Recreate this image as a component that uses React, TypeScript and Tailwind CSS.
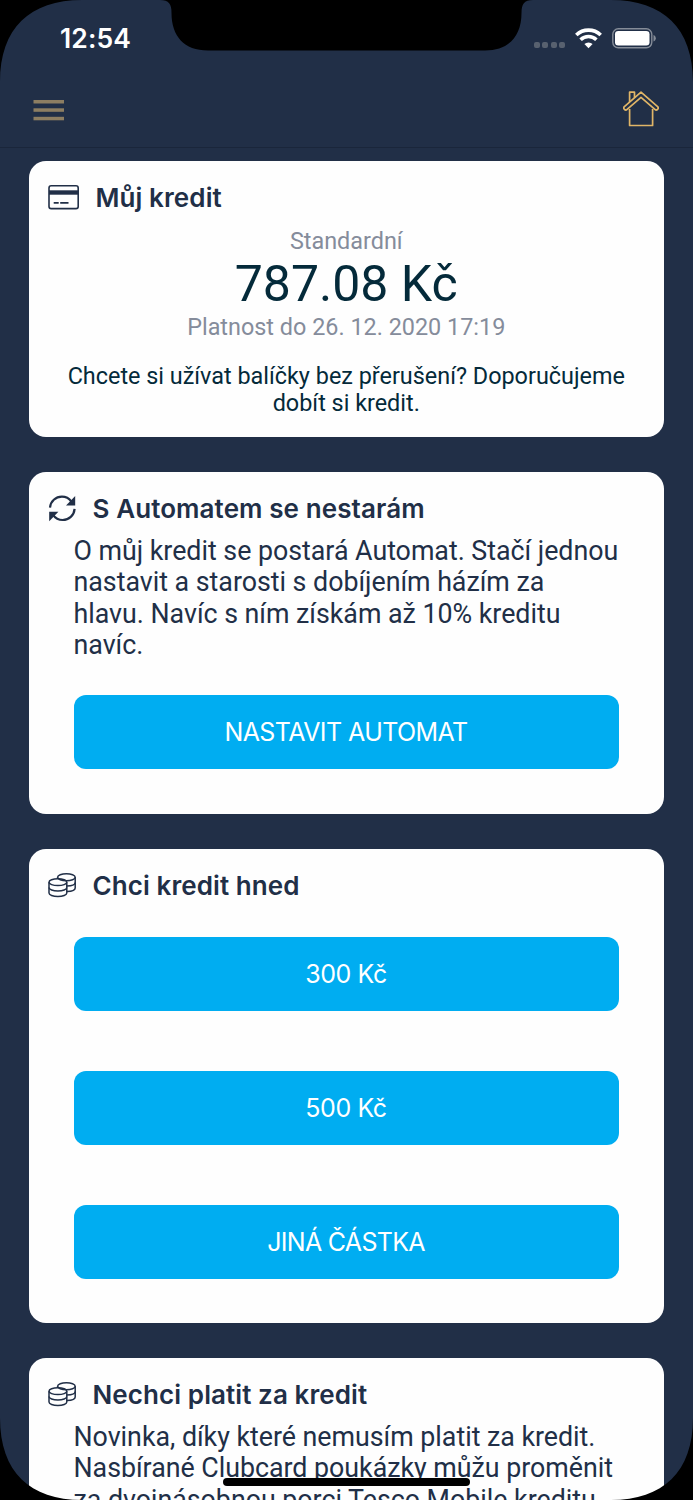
import { ReactNode } from "react";

// ----------------------
// ICONS
// ----------------------
function MenuIcon() {
  return (
    <svg width="31" height="21" viewBox="0 0 31 21" fill="#8d7e62">
      <rect x="0.5" y="0" width="30.5" height="3.5" />
      <rect x="0.5" y="8.3" width="30.5" height="3.5" />
      <rect x="0.5" y="16.8" width="30.5" height="3.5" />
    </svg>
  );
}

function HomeIcon() {
  return (
    <svg width="36" height="36" viewBox="0 0 36 36" fill="none" stroke="#e0b567" strokeWidth="1.7" strokeLinejoin="round">
      <path d="M6.6 18v16.5h23V18" />
      <path d="M18 1.2 1.4 15.6a1.7 1.7 0 0 0 2.7 2.7L18 6.4l13.9 11.9a1.7 1.7 0 0 0 2.7-2.7L18 1.2Z" />
      <path d="M6.6 11V1.2h4.9v5.6" />
    </svg>
  );
}

function CardIcon() {
  return (
    <svg width="31" height="25" viewBox="0 0 31 25" fill="none" stroke="#212f47">
      <rect x="1" y="0.8" width="29.2" height="22.8" rx="2.2" strokeWidth="1.6" />
      <path d="M1 7.5h29" strokeWidth="4.4" />
      <path d="M5.7 17.9h5M12.2 17.9h8.3" strokeWidth="1.7" />
    </svg>
  );
}

function RefreshIcon() {
  return (
    <svg width="28" height="27" viewBox="0 0 28 27" fill="none" stroke="#212f47" strokeWidth="2.2">
      <path d="M2 12.7C2.5 6.2 7.7 1.7 13.9 1.7c4 0 7.3 1.9 9.5 4.9" />
      <path d="M26.6 13.9c-.5 6.6-5.7 11.1-11.9 11.1-4.2 0-7.5-2-9.7-5.2" />
      <path d="M27.2 1v9.5H18Z" fill="#212f47" stroke="none" />
      <path d="M1.2 26.2v-9.5h9.2Z" fill="#212f47" stroke="none" />
    </svg>
  );
}

function CoinsIcon() {
  return (
    <svg width="28" height="25" viewBox="0 0 28 25" fill="none" stroke="#212f47" strokeWidth="1.5">
      <ellipse cx="9.9" cy="9.2" rx="8.9" ry="3.4" />
      <path d="M1 9.2v10.7c0 2 4 3.6 8.9 3.6s8.9-1.6 8.9-3.6V9.2" />
      <path d="M1 14.5c0 2 4 3.6 8.9 3.6s8.9-1.6 8.9-3.6" />
      <path d="M9.6 5.8V4.3c0-2 4-3.5 8.8-3.5s8.8 1.500 8.800 3.500v10.600c0 1.800-3.300 3.300-8.300 3.700" />
      <path d="M9.600 4.300c0 2 4 3.500 8.800 3.500s8.800-1.500 8.800-3.500" />
      <path d="M18.800 13.100c5-.2 8.400-1.700 8.400-3.600" />
    </svg>
  );
}

function WifiIcon() {
  return (
    <svg width="27" height="21" viewBox="0 0 27 21" fill="none" stroke="#fff" strokeWidth="3.6">
      <path d="M1.3 7a17.6 17.6 0 0 1 24.4 0" />
      <path d="M5.6 11.7a11.4 11.4 0 0 1 15.8 0" />
      <path d="M13.5 20.3 9.4 16.1a5.8 5.8 0 0 1 8.2 0Z" fill="#fff" stroke="none" />
    </svg>
  );
}

function BatteryIcon() {
  return (
    <svg width="45" height="21" viewBox="0 0 45 21">
      <rect x="0.8" y="0.8" width="39" height="19" rx="5.5" fill="none" stroke="#858c98" strokeWidth="1.4" />
      <rect x="3" y="3" width="34.5" height="14.6" rx="3.3" fill="#fff" />
      <path d="M41.5 7v6.6c1.4-.5 2.3-1.8 2.3-3.3s-.9-2.8-2.3-3.3Z" fill="#858c98" />
    </svg>
  );
}

// ----------------------
// BUILDING BLOCKS
// ----------------------
function Card({ className, children }: { className: string; children: ReactNode }) {
  return (
    <section className={`w-[635.5px] shrink-0 rounded-[17px] bg-[#fefefe] text-[#212f47] ${className}`}>
      {children}
    </section>
  );
}

function CardTitle({ icon, children }: { icon: ReactNode; children: ReactNode }) {
  return (
    <h2 className="flex h-[73px] items-center pl-[19.5px] text-[26px] font-semibold tracking-[0.09px] whitespace-nowrap">
      {icon}
      <span className="ml-[16.5px]">{children}</span>
    </h2>
  );
}

function ActionButton({ className = "", children }: { className?: string; children: ReactNode }) {
  return (
    <button
      className={`block h-[73.5px] w-[545px] rounded-xl bg-[#00adf1] pt-[2px] text-center text-[25px] text-white ${className}`}
    >
      {children}
    </button>
  );
}

const amounts = [
  { label: "300 Kč", style: "tracking-[-0.4px]" },
  { label: "500 Kč", style: "tracking-[-0.4px]" },
  { label: "JINÁ ČÁSTKA", style: "tracking-[-0.7px]" },
];

export default function App() {
  return (
    <div className="relative h-[1500px] w-[693px] overflow-hidden bg-[#212f47] font-['Inter',sans-serif]">
      <header className="flex h-[148px] flex-col border-b border-[#1a263b]">
        {/* Status bar */}
        <div className="flex h-[76px] items-center justify-between pr-9 pl-[60px] text-white">
          <span className="pt-[2px] text-[26.5px] font-semibold tracking-[0.1px]">12:54</span>
          <div className="flex items-center">
            <div className="mt-3.5 mr-[10px] flex gap-[2.5px]">
              {[0, 1, 2, 3].map((dot) => (
                <span key={dot} className="size-1.5 rounded-[2px] bg-[#58616f]" />
              ))}
            </div>
            <WifiIcon />
            <span className="ml-[10px]">
              <BatteryIcon />
            </span>
          </div>
        </div>
        {/* Toolbar */}
        <div className="flex h-[66px] items-center justify-between pr-[34px] pl-[33px]">
          <button className="pt-[3px]">
            <MenuIcon />
          </button>
          <HomeIcon />
        </div>
      </header>

      <main className="flex flex-col gap-[35px] pt-[13px] pl-[28.5px]">
        <Card className="h-[276px]">
          <CardTitle icon={<CardIcon />}>Můj kredit</CardTitle>
          <div className="-mt-[7px] text-center font-['Roboto',sans-serif]">
            <p className="text-[23.4px] leading-[28px] text-[#858c9b]">Standardní</p>
            <p className="text-[50px] leading-[58px] text-[#042a3a]">787.08 Kč</p>
            <p className="text-[23.4px] leading-[28px] text-[#858c9b]">Platnost do 26. 12. 2020 17:19</p>
            <p className="mt-[22px] text-[23.4px] leading-[27px] whitespace-nowrap text-[#042a3a]">
              Chcete si užívat balíčky bez přerušení? Doporučujeme
              <br />
              dobít si kredit.
            </p>
          </div>
        </Card>

        <Card className="h-[342px]">
          <CardTitle icon={<RefreshIcon />}>S Automatem se nestarám</CardTitle>
          <p className="-mt-[9px] ml-[45px] font-['Roboto',sans-serif] text-[26.8px] leading-[31.3px] tracking-[-0.02px] whitespace-nowrap">
            O můj kredit se postará Automat. Stačí jednou
            <br />
            nastavit a starosti s dobíjením házím za
            <br />
            hlavu. Navíc s ním získám až 10% kreditu
            <br />
            navíc.
          </p>
          <ActionButton className="mt-[34px] ml-[45px] tracking-[-0.58px]">NASTAVIT AUTOMAT</ActionButton>
        </Card>

        <Card className="h-[474px]">
          <CardTitle icon={<CoinsIcon />}>Chci kredit hned</CardTitle>
          <div className="mt-[15px] ml-[45px] flex flex-col gap-[60.5px]">
            {amounts.map((amount) => (
              <ActionButton key={amount.label} className={amount.style}>
                {amount.label}
              </ActionButton>
            ))}
          </div>
        </Card>

        <Card className="h-[276px]">
          <CardTitle icon={<CoinsIcon />}>Nechci platit za kredit</CardTitle>
          <p className="-mt-[9px] ml-[45px] font-['Roboto',sans-serif] text-[26.8px] leading-[31.3px] tracking-[-0.02px] whitespace-nowrap">
            Novinka, díky které nemusím platit za kredit.
            <br />
            Nasbírané Clubcard poukázky můžu proměnit
            <br />
            za dvojnásobnou porci Tesco Mobile kreditu
          </p>
        </Card>
      </main>

      {/* Device frame: rounded corners, notch and home indicator */}
      <svg className="pointer-events-none absolute inset-0" width="693" height="1500" viewBox="0 0 693 1500">
        <path d="M0 0H82C30 0 0 28 0 82Z" />
        <path d="M693 0H611C663 0 693 28 693 82Z" />
        <path d="M0 1500H82C30 1500 0 1472 0 1418Z" />
        <path d="M693 1500H611C663 1500 693 1472 693 1418Z" />
        <path d="M160 0C169 0 171.5 4 171.5 13C171.5 36 184 50.5 208 50.5H485C509 50.5 521.5 36 521.5 13C521.5 4 524 0 533 0Z" />
        <rect x="223" y="1478" width="247" height="8" rx="4" />
      </svg>
    </div>
  );
}
